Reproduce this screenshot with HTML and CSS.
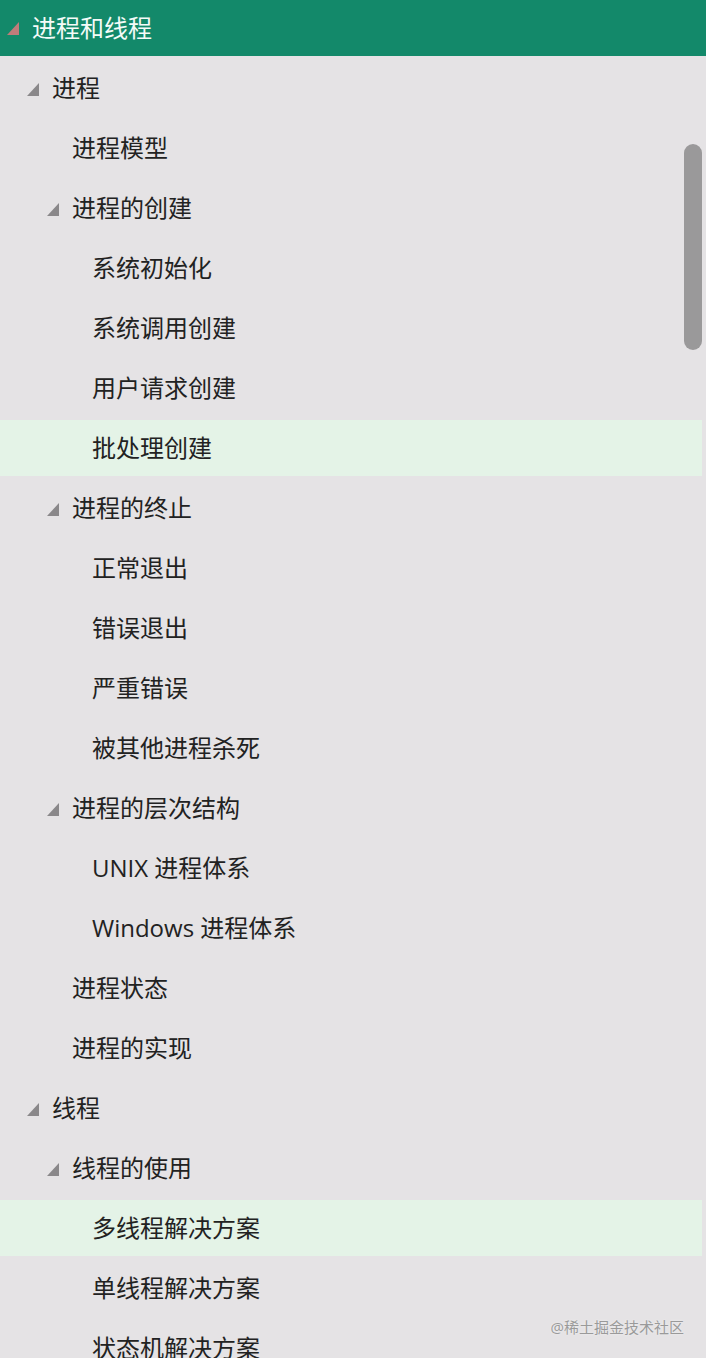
FILE: index.html
```html
<!DOCTYPE html>
<html lang="zh">
<head>
<meta charset="utf-8">
<link rel="stylesheet" href="styles.css">
</head>
<body>
<div class="panel">
  <div class="header">
    <svg class="tri tri-head" viewBox="0 0 12 13"><polygon points="12,0 12,13 0,13"/></svg>
    <span>进程和线程</span>
  </div>
  <ul class="tree">
    <li class="row l1"><svg class="tri" viewBox="0 0 12 13"><polygon points="12,0 12,13 0,13"/></svg><span>进程</span></li>
    <li class="row l2 leaf"><span>进程模型</span></li>
    <li class="row l2"><svg class="tri" viewBox="0 0 12 13"><polygon points="12,0 12,13 0,13"/></svg><span>进程的创建</span></li>
    <li class="row l3"><span>系统初始化</span></li>
    <li class="row l3"><span>系统调用创建</span></li>
    <li class="row l3"><span>用户请求创建</span></li>
    <li class="row l3 hl"><span>批处理创建</span></li>
    <li class="row l2"><svg class="tri" viewBox="0 0 12 13"><polygon points="12,0 12,13 0,13"/></svg><span>进程的终止</span></li>
    <li class="row l3"><span>正常退出</span></li>
    <li class="row l3"><span>错误退出</span></li>
    <li class="row l3"><span>严重错误</span></li>
    <li class="row l3"><span>被其他进程杀死</span></li>
    <li class="row l2"><svg class="tri" viewBox="0 0 12 13"><polygon points="12,0 12,13 0,13"/></svg><span>进程的层次结构</span></li>
    <li class="row l3"><span>UNIX 进程体系</span></li>
    <li class="row l3"><span>Windows 进程体系</span></li>
    <li class="row l2 leaf"><span>进程状态</span></li>
    <li class="row l2 leaf"><span>进程的实现</span></li>
    <li class="row l1"><svg class="tri" viewBox="0 0 12 13"><polygon points="12,0 12,13 0,13"/></svg><span>线程</span></li>
    <li class="row l2"><svg class="tri" viewBox="0 0 12 13"><polygon points="12,0 12,13 0,13"/></svg><span>线程的使用</span></li>
    <li class="row l3 hl"><span>多线程解决方案</span></li>
    <li class="row l3"><span>单线程解决方案</span></li>
    <li class="row l3"><span>状态机解决方案</span></li>
  </ul>
  <div class="scrollbar"></div>
  <div class="watermark">@稀土掘金技术社区</div>
</div>
</body>
</html>
```
FILE: styles.css
```css
html, body {
  margin: 0;
  padding: 0;
  background: #e5e3e5;
}
body {
  width: 706px;
  height: 1358px;
  overflow: hidden;
  font-family: "Open Sans", "Noto Sans CJK SC", sans-serif;
  font-weight: 400;
  color: #222222;
}
.panel {
  position: relative;
  width: 706px;
  height: 1358px;
  overflow: hidden;
  background: #e5e3e5;
}
.header {
  height: 56px;
  background: #13896a;
  color: #f4fbf8;
  display: flex;
  align-items: center;
  font-size: 24px;
  padding-left: 7px;
  box-sizing: border-box;
}
.header span {
  margin-left: 13px;
  line-height: 1;
}
.tri {
  width: 12px;
  height: 13px;
  flex: none;
  fill: #8a888a;
}
.tri-head {
  fill: #bf7c7a;
}
.tree {
  list-style: none;
  margin: 4px 0 0;
  padding: 0;
  display: flex;
  flex-direction: column;
  gap: 4px;
}
.row {
  height: 56px;
  width: 702px;
  display: flex;
  align-items: center;
  font-size: 24px;
  box-sizing: border-box;
}
.row span {
  line-height: 1;
}
.row .tri {
  margin-right: 13px;
  margin-top: 2px;
}
.l1 { padding-left: 27px; }
.l2 { padding-left: 47px; }
.l2.leaf { padding-left: 72px; }
.l3 { padding-left: 92px; }
.hl {
  background: #e4f3e7;
}
.scrollbar {
  position: absolute;
  left: 684px;
  top: 144px;
  width: 18px;
  height: 206px;
  border-radius: 9px;
  background: #9a999a;
}
.watermark {
  position: absolute;
  right: 22px;
  top: 1316px;
  font-size: 15px;
  color: #9a9a9a;
  text-shadow: 0 0 2px #f4f4f4;
}
```
